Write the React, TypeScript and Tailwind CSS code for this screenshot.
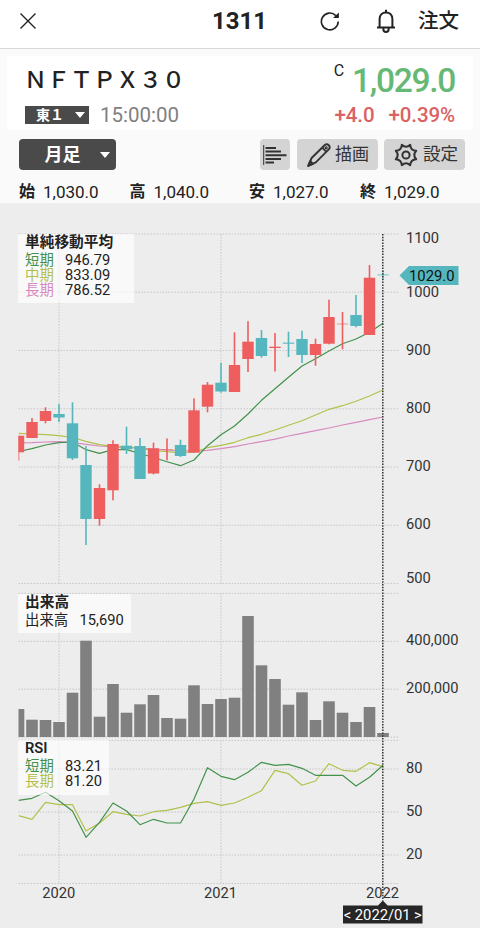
import type { ReactNode } from 'react';

interface Candle {
    up: boolean;
    high: number;
    top: number;
    bottom: number;
    low: number;
    faint?: boolean;
}

const STEP = 13.5;
const LEFT = 18.5;
const RIGHT = 399;
const CURSOR_X = 382.8;

const RED = '#ee5e5e';
const TEAL = '#55b7bd';
const GREEN = '#43924c';
const LIME = '#b2c14b';
const PINK = '#d68abf';

const c = (up: boolean, high: number, top: number, bottom: number, low: number, faint = false): Candle => ({
    up, high, top, bottom, low, faint,
});

const candles: Candle[] = [
    c(true, 435.7, 435.7, 452.3, 460.7),
    c(true, 418, 422, 438, 438),
    c(true, 407.3, 411, 421, 423.3),
    c(false, 404, 414, 417.5, 422),
    c(false, 402.3, 423.3, 458.3, 460),
    c(false, 446, 465, 519, 545),
    c(true, 484.3, 488, 519, 525.7),
    c(true, 440.3, 444, 490.3, 500.3),
    c(false, 426.7, 445.7, 449.3, 454),
    c(false, 438, 446, 479, 479),
    c(true, 442.7, 448.3, 473.5, 474.3),
    c(true, 438.5, 449.2, 450.2, 460.3, true),
    c(false, 439.7, 445, 456, 457),
    c(true, 398.3, 410.3, 452.7, 452.7),
    c(true, 382, 384.7, 406.7, 412.3),
    c(false, 362.7, 382.7, 391.5, 392.7),
    c(true, 332.3, 365, 392, 392),
    c(true, 321.3, 341.7, 359, 372),
    c(false, 330, 338, 356, 357.7),
    c(true, 333, 346.7, 348, 371.5),
    c(false, 331.7, 342.6, 343.7, 357),
    c(false, 330.7, 339, 355, 363),
    c(true, 338.7, 344, 355, 365.7),
    c(true, 299.7, 317, 343.7, 344.3),
    c(true, 312, 323.6, 324.4, 349.3, true),
    c(false, 295, 315, 326, 327.3),
    c(true, 265, 277.7, 335, 335),
    c(false, 270, 274.4, 275.4, 280, true),
];

const maShort = [451.5, 448.7, 445, 442.7, 442, 449.7, 453.3, 449.7, 449.7, 453.5, 457.5, 461.7, 465.7, 460, 445.7, 434.7, 426, 414, 400.3, 388.7, 377.3, 366, 358.7, 351, 343.7, 339, 332.3, 323.3];
const maMiddle = [433.3, 434, 434.7, 435.7, 437.5, 441.3, 444.7, 446.3, 447, 448.5, 450.3, 451.7, 452.7, 452, 447.7, 445.3, 442.3, 437.7, 434.3, 430, 425.3, 420.7, 415, 409.3, 405.7, 401.3, 396, 390];
const maLong = [443, 442.7, 442, 441.7, 442.3, 444.3, 446, 447, 447.3, 448, 449, 450, 450.7, 451, 450.3, 448.7, 446.7, 444, 441.7, 439.2, 436, 433.3, 430.7, 428, 425, 422.3, 419.7, 417];

const volumeTops = [709, 719.7, 720, 722, 692.7, 640.7, 716.7, 684, 712.7, 704.3, 695, 718, 718.7, 685.3, 704, 699, 697.7, 616, 665.3, 679, 704.7, 692.3, 720, 701.3, 712.7, 722, 707, 733];

const rsiShort = [800.3, 798.3, 792.3, 800.7, 811, 837.3, 822.3, 803, 811, 824.7, 819.3, 823, 823, 799, 767.7, 776.3, 779.7, 772.3, 762.3, 765.3, 764.3, 768.3, 775.3, 775.3, 775.3, 786, 777.3, 765.3];
const rsiLong = [815.7, 819.3, 802.3, 804.7, 804.7, 831, 823, 811.7, 814.3, 816, 811.7, 810.3, 807.3, 803.3, 801.7, 805.3, 803, 797.3, 790.7, 770.3, 773.7, 785.3, 781, 763.7, 770.3, 771.3, 762.7, 766.7];

const gridRows = [234, 292.2, 350.5, 408.8, 467.1, 525.3, 583.5, 593.4, 641.4, 689.2, 737, 740.4, 769, 812, 855, 883.5];
const gridSpans = [[234, 583.5], [593.4, 737], [740.4, 883.5]];

const axisLabels: [string, number][] = [
    ['1100', 243], ['1000', 296.5], ['900', 355], ['800', 413], ['700', 471], ['600', 529], ['500', 582.5],
    ['400,000', 645], ['200,000', 693], ['80', 773], ['50', 816], ['20', 859],
];

const xAt = (i: number) => LEFT + i * STEP;
const toPoints = (ys: number[]) => ys.map((y, i) => `${xAt(i)},${y}`).join(' ');

function Line({ ys, color }: { ys: number[]; color: string }) {
    return <polyline points={toPoints(ys)} fill="none" stroke={color} strokeWidth="1.2" strokeLinejoin="round" />;
}

function Chart() {
    return (
        <svg className="block" width="480" height="725" viewBox="0 203 480 725">
            <defs>
                <clipPath id="plot">
                    <rect x={LEFT} y="203" width="400" height="725" />
                </clipPath>
            </defs>

            <g stroke="#c6c6c6" strokeWidth="1" strokeDasharray="1.5 1.5">
                {gridRows.map((y) => <line key={y} x1={LEFT} x2={RIGHT} y1={y} y2={y} />)}
                {[3, 15].map((i) => gridSpans.map(([y1, y2]) => (
                    <line key={`${i}-${y1}`} x1={xAt(i)} x2={xAt(i)} y1={y1} y2={y2} />
                )))}
            </g>

            <g clipPath="url(#plot)">
                <Line ys={maLong} color={PINK} />
                <Line ys={maMiddle} color={LIME} />
                <Line ys={maShort} color={GREEN} />
                {candles.map((d, i) => (
                    <g key={i} fill={d.up ? RED : TEAL}>
                        <rect x={xAt(i) - 0.8} y={d.high} width="1.6" height={d.low - d.high} opacity={i === 27 ? 0.6 : 1} />
                        <rect x={xAt(i) - 5.7} y={d.top} width="11.4" height={d.bottom - d.top} opacity={d.faint ? 0.75 : 1} />
                    </g>
                ))}
                {volumeTops.map((y, i) => (
                    <rect key={i} x={xAt(i) - 5.8} y={y} width="11.6" height={737 - y} fill="#808080" />
                ))}
                <Line ys={rsiLong} color={LIME} />
                <Line ys={rsiShort} color={GREEN} />
            </g>

            <g fill="#333333" fontFamily="Roboto, sans-serif" fontSize="14.7">
                {axisLabels.map(([label, y]) => <text key={label} x="406" y={y}>{label}</text>)}
                <g textAnchor="middle">
                    <text x="58.7" y="898">2020</text>
                    <text x="220.5" y="898">2021</text>
                    <text x="382.5" y="898">2022</text>
                </g>
            </g>

            <line x1={CURSOR_X} x2={CURSOR_X} y1="234" y2="901" stroke="#333333" strokeWidth="1.5" strokeDasharray="1.5 1.3" />

            <path d="M399.5 275.5 L409 266 H458.5 V285 H409 Z" fill={TEAL} />
            <text x="409" y="281" fill="#111111" fontFamily="Roboto, sans-serif" fontSize="14.8">1029.0</text>

            <path d="M343 905.5 H378 L382.8 900.5 L387.6 905.5 H422.5 V923.5 H343 Z" fill="#262626" />
            <text x="382.8" y="920" fill="#ffffff" fontFamily="Roboto, sans-serif" fontSize="14.8" textAnchor="middle" textLength="78">&lt; 2022/01 &gt;</text>
        </svg>
    );
}

function Legend({ className, title, children }: { className: string; title: string; children: ReactNode }) {
    return (
        <div className={`absolute left-[18px] bg-white/65 pt-px pl-[7px] text-[14.7px] leading-[15px] text-[#222] ${className}`}>
            <div className="h-[15px] font-semibold">{title}</div>
            <div className="mt-[3px]">{children}</div>
        </div>
    );
}

function LegendRow({ label, value, color }: { label: string; value: string; color: string }) {
    return (
        <div className="flex h-[15px]">
            <span className={`w-10 text-[14.4px] ${color}`}>{label}</span>
            <span>{value}</span>
        </div>
    );
}

function Caret() {
    return (
        <svg width="10" height="6" viewBox="0 0 10 6">
            <path d="M0 0 H10 L5 6 Z" fill="#fff" />
        </svg>
    );
}

function Header() {
    return (
        <header className="flex h-[49px] items-center border-b border-[#d8d8d8] bg-white pb-1.5">
            <svg className="ml-5" width="16" height="16" viewBox="0 0 16 16" stroke="#222" strokeWidth="1.4">
                <path d="M.5 .5 L15.5 15.5 M15.5 .5 L.5 15.5" />
            </svg>
            <h1 className="ml-[176px] w-[56px] text-[24px] leading-none font-bold text-[#222]">1311</h1>
            <svg className="ml-[52px]" width="20" height="20" viewBox="0 0 20 20" fill="none" stroke="#222" strokeWidth="1.6">
                <path d="M18.2 10.5 A8.4 8.4 0 1 1 15.8 4.6" />
                <path d="M18.9 1.5 V7 H13 Z" fill="#222" stroke="none" />
            </svg>
            <svg className="ml-[36px]" width="20" height="24" viewBox="0 0 20 24" fill="none" stroke="#222" strokeWidth="2">
                <path d="M1 18.5 H19" />
                <path d="M3.6 18.5 V10 C3.6 5.8 6.3 3.4 10 3.4 S16.4 5.8 16.4 10 V18.5" />
                <path d="M10 .7 V3.6" />
                <path d="M7.4 19 V20.5 A2.6 2.4 0 0 0 12.6 20.5 V19" />
            </svg>
            <span className="mt-px ml-[22px] text-[20.5px] leading-none font-medium text-[#222]">注文</span>
        </header>
    );
}

function Quote() {
    return (
        <section className="mx-[7px] mt-[7px] flex h-[74px] justify-between bg-white pr-[17px] pl-[18px]">
            <div>
                <div className="-ml-px mt-[11px] h-[28px] text-[23px] leading-[28px] font-medium whitespace-nowrap text-[#222]">ＮＦＴＰＸ３０</div>
                <div className="mt-[11px] flex h-[18px] items-center">
                    <div className="flex h-[18px] w-[64px] items-center bg-[#4a4a4a] pl-[11px] text-[14px] leading-none font-bold text-white">
                        <span className="w-[39px]">東１</span>
                        <Caret />
                    </div>
                    <span className="ml-[11px] text-[20.5px] leading-none text-[#808080]">15:00:00</span>
                </div>
            </div>
            <div className="flex flex-col items-end">
                <div className="mt-[5px] mr-px flex h-[40px]">
                    <span className="-mt-px mr-[8px] text-[16px] leading-[22px] text-[#222]">C</span>
                    <span className="text-[33.5px] leading-[39px] font-medium tracking-[-1.3px] text-[#66b975]">1,029.0</span>
                </div>
                <div className="mt-[1px] mr-px flex gap-[14px] text-[20.5px] leading-[26px] font-medium tracking-[-0.1px] text-[#d96262]">
                    <span>+4.0</span>
                    <span>+0.39%</span>
                </div>
            </div>
        </section>
    );
}

function Toolbar() {
    return (
        <div className="mt-[9px] flex h-[31px] items-center pr-[15px] pl-[19px] text-[17px] leading-none text-[#333]">
            <button className="mr-auto flex h-[31px] w-[97px] items-center rounded bg-[#4a4a4a] pl-[25.5px] text-[18px] font-bold text-white">
                <span className="w-[55px] text-left">月足</span>
                <Caret />
            </button>
            <button className="mr-[7px] flex h-[31px] w-[30px] items-center justify-center rounded bg-[#d4d4d4]">
                <svg width="24" height="20" viewBox="0 0 24 20" stroke="#333" strokeWidth="2">
                    <path d="M.7 0 V20" strokeWidth="1" />
                    <path d="M2.5 3 H13 M2.5 6.6 H18 M2.5 10.3 H23.5 M2.5 14 H18 M2.5 17.6 H11" />
                </svg>
            </button>
            <button className="mr-[6px] flex h-[31px] w-[81px] items-center rounded bg-[#d4d4d4] pl-[10px]">
                <svg className="mr-[4px]" width="24" height="24" viewBox="0 0 24 24" fill="none" stroke="#333" strokeWidth="1.9" strokeLinejoin="round">
                    <path d="M1.2 22.8 L4.6 15 L17.8 2 A3 3 0 0 1 22 6.2 L8.8 19.3 Z" />
                    <path d="M1.2 22.8 L3.2 18 L6 20.8 Z" fill="#333" />
                    <path d="M15.2 4.6 L19.4 8.8" />
                    <circle cx="19.2" cy="4.8" r="1" strokeWidth="1.2" />
                </svg>
                <span>描画</span>
            </button>
            <button className="flex h-[31px] w-[81px] items-center rounded bg-[#d4d4d4] pl-[10px]">
                <svg className="mr-[5px]" width="24" height="24" viewBox="0 0 24 24" fill="none" stroke="#333" strokeWidth="2" strokeLinejoin="round">
                    <path d="M7.8 1.8 Q12 5.6 16.2 1.8 Q16.5 7.5 22.2 7.8 Q18.4 12 22.2 16.2 Q16.5 16.5 16.2 22.2 Q12 18.4 7.8 22.2 Q7.5 16.5 1.8 16.2 Q5.6 12 1.8 7.8 Q7.5 7.5 7.8 1.8 Z" />
                    <circle cx="12" cy="12" r="3.6" />
                </svg>
                <span className="mt-px text-[17.5px]">設定</span>
            </button>
        </div>
    );
}

const prices = [
    { label: '始', value: '1,030.0', width: 'w-[110.5px]' },
    { label: '高', value: '1,040.0', width: 'w-[119.5px]' },
    { label: '安', value: '1,027.0', width: 'w-[111px]' },
    { label: '終', value: '1,029.0', width: 'w-[100px]' },
];

export default function App() {
    return (
        <div className="h-[928px] w-[480px] overflow-hidden bg-[#fafafa] font-[Roboto,'Noto_Sans_CJK_JP',sans-serif]">
            <Header />
            <Quote />
            <Toolbar />
            <div className="mt-[8px] flex h-[25px] items-center pt-[3px] pl-[19px] leading-none text-[#222]">
                {prices.map((p) => (
                    <div key={p.label} className={`flex items-center ${p.width}`}>
                        <span className="w-[24px] text-[16px] font-bold">{p.label}</span>
                        <span className="text-[17px]">{p.value}</span>
                    </div>
                ))}
            </div>
            <main className="relative h-[725px] bg-[#ededed]">
                <Chart />
                <Legend className="top-[31px] h-[69px] w-[116px]" title="単純移動平均">
                    <LegendRow label="短期" value="946.79" color="text-[#43924c]" />
                    <LegendRow label="中期" value="833.09" color="text-[#b2c14b]" />
                    <LegendRow label="長期" value="786.52" color="text-[#d68abf]" />
                </Legend>
                <Legend className="top-[391px] h-[39px] w-[113px]" title="出来高">
                    <div className="flex">
                        <span className="w-[54.5px] text-[14.4px]">出来高</span>
                        <span>15,690</span>
                    </div>
                </Legend>
                <Legend className="top-[537px] h-[55px] w-[91px]" title="RSI">
                    <LegendRow label="短期" value="83.21" color="text-[#43924c]" />
                    <LegendRow label="長期" value="81.20" color="text-[#b2c14b]" />
                </Legend>
            </main>
        </div>
    );
}
